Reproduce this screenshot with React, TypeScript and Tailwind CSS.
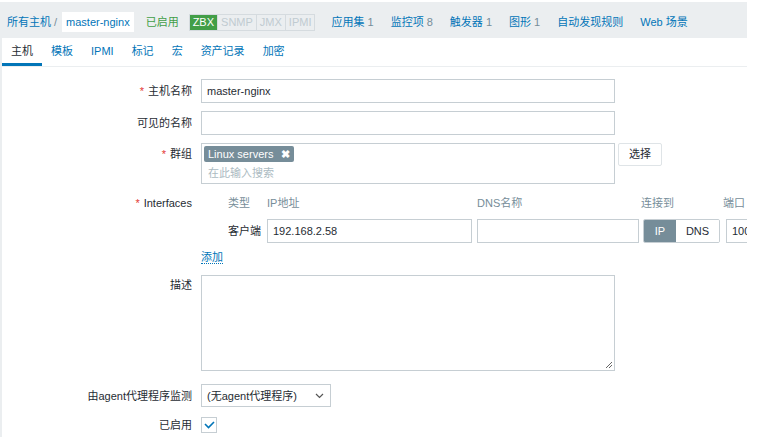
import React from 'react';

const font = { fontFamily: '"Liberation Sans", Arial, "Noto Sans CJK SC", sans-serif' };

const Label: React.FC<{ text: string; req?: boolean; pt?: string; lh?: string }> = ({ text, req, pt, lh }) => (
  <div className={`text-right text-[11px] text-[#1f2c33] ${pt ?? ''} ${lh ?? 'leading-[24px]'}`}>
    {req && <span className="text-[#e33734] mr-[4px]">*</span>}
    {text}
  </div>
);

const Row: React.FC<{ label: React.ReactNode; children: React.ReactNode; className?: string }> = ({ label, children, className }) => (
  <div className={`grid grid-cols-[190px_1fr] gap-x-[9px] leading-[16px] ${className ?? ''}`}>
    {label}
    <div>{children}</div>
  </div>
);

const Input: React.FC<{ value?: string; className?: string }> = ({ value, className }) => (
  <div className={`h-[24px] shrink-0 border border-[#c6ced3] bg-white px-[5px] text-[11px] leading-[22px] text-[#1f2c33] whitespace-nowrap overflow-hidden ${className ?? ''}`}>
    {value}
  </div>
);

export default function App() {
  const links: Array<[string, string?]> = [
    ['应用集', '1'],
    ['监控项', '8'],
    ['触发器', '1'],
    ['图形', '1'],
    ['自动发现规则'],
    ['Web 场景'],
  ];
  const tabs = ['主机', '模板', 'IPMI', '标记', '宏', '资产记录', '加密'];

  return (
    <div className="w-[761px] h-[442px] bg-white overflow-hidden" style={font}>
      <div className="w-[747px] pt-[2px] overflow-hidden">
        {/* header */}
        <div className="h-[36px] bg-[#ebeef0] flex items-center pt-[4px] pl-[7px] text-[11px] whitespace-nowrap">
          <span className="text-[#0275b8]">所有主机</span>
          <span className="text-[#768d99] ml-[3px] mr-[5px]">/</span>
          <span className="bg-white text-[#0275b8] h-[20px] leading-[20px] px-[4px]">master-nginx</span>
          <span className="text-[#429e47] ml-[12px]">已启用</span>
          <span className="ml-[10px] flex h-[17px] leading-[15px] border border-[#d5dbdf]">
            <span className="bg-[#429e47] text-white px-[3px]">ZBX</span>
            <span className="text-[#c0cbd0] px-[3px] border-l border-[#d5dbdf]">SNMP</span>
            <span className="text-[#c0cbd0] px-[3px] border-l border-[#d5dbdf]">JMX</span>
            <span className="text-[#c0cbd0] px-[3px] border-l border-[#d5dbdf]">IPMI</span>
          </span>
          {links.map(([t, n], i) => (
            <span key={t} className={i === 0 ? 'ml-[16px]' : 'ml-[17px]'}>
              <span className="text-[#0275b8]">{t}</span>
              {n && <span className="text-[#768d99]"> {n}</span>}
            </span>
          ))}
        </div>
        {/* body */}
        <div className="border-l-2 border-[#ebeef0]">
          <div className="flex h-[29px] border-b border-[#ebeef0] text-[11px]">
            {tabs.map((t, i) => (
              <div
                key={t}
                className={`px-[9px] leading-[26px] border-b-[3px] ${i === 0 ? 'border-[#0275b8] text-[#1f2c33]' : 'border-transparent text-[#0275b8]'}`}
              >
                {t}
              </div>
            ))}
          </div>

          <div className="pt-[12px] flex flex-col">
            <Row label={<Label text="主机名称" req />}>
              <Input value="master-nginx" className="w-[414px]" />
            </Row>
            <Row label={<Label text="可见的名称" />} className="mt-[8px]">
              <Input className="w-[414px]" />
            </Row>
            <Row label={<Label text="群组" req pt="pt-[3px]" lh="leading-[16px]" />} className="mt-[8px]">
              <div className="flex items-start">
                <div className="w-[414px] h-[41px] border border-[#c6ced3] bg-white pl-[2px] pt-[2px] flex flex-col items-start">
                  <div className="flex items-center h-[16px] bg-[#768d99] text-white text-[11px] leading-[16px] px-[4px] rounded-[2px]">
                    Linux servers
                    <span className="ml-[8px] font-bold text-[11px]">✖</span>
                  </div>
                  <div className="text-[11px] text-[#acbbc2] leading-[16px] mt-[3px] pl-[4px]">在此输入搜索</div>
                </div>
                <div className="ml-[3px] w-[44px] h-[23px] border border-[#dfe4e7] rounded-[2px] bg-white text-center text-[11px] leading-[21px] text-[#1f2c33]">
                  选择
                </div>
              </div>
            </Row>
            <Row label={<Label text="Interfaces" req lh="leading-[16px]" />} className="mt-[11px]">
              <div className="pl-[27px] text-[11px] whitespace-nowrap">
                <div className="flex text-[#768d99] leading-[16px]">
                  <div className="w-[39px]">类型</div>
                  <div className="w-[210px]">IP地址</div>
                  <div className="w-[164px]">DNS名称</div>
                  <div className="w-[82px]">连接到</div>
                  <div>端口</div>
                </div>
                <div className="flex items-center mt-[8px]">
                  <div className="w-[39px] shrink-0 text-[#1f2c33]">客户端</div>
                  <Input value="192.168.2.58" className="w-[205px]" />
                  <Input className="w-[162px] ml-[5px]" />
                  <div className="ml-[4px] shrink-0 flex h-[24px] w-[77px] border border-[#c6ced3] rounded-[2px] overflow-hidden text-[11px] leading-[22px]">
                    <div className="w-[32px] bg-[#768d99] text-white text-center">IP</div>
                    <div className="flex-1 text-center text-[#1f2c33] bg-white">DNS</div>
                  </div>
                  <Input value="10050" className="w-[56px] ml-[6px]" />
                </div>
              </div>
            </Row>
            <Row label={<div />} className="mt-[7px]">
              <div className="h-[16px] leading-[15px] text-[11px]">
                <span className="text-[#0275b8] border-b border-dotted border-[#0275b8]">添加</span>
              </div>
            </Row>
            <Row label={<Label text="描述" pt="pt-[2px]" lh="leading-[16px]" />} className="mt-[9px]">
              <div className="relative w-[414px] h-[96px] border border-[#c6ced3] bg-white">
                <svg className="absolute right-[1px] bottom-[1px]" width="9" height="9" viewBox="0 0 9 9">
                  <path d="M8 2 L2 8 M8 5 L5 8" stroke="#666" strokeWidth="1" />
                </svg>
              </div>
            </Row>
            <Row label={<Label text="由agent代理程序监测" />} className="mt-[13px]">
              <div className="w-[130px] h-[23px] border border-[#c6ced3] bg-white flex items-center justify-between pl-[5px] pr-[6px] text-[11px] text-[#1f2c33] whitespace-nowrap">
                <span>(无agent代理程序)</span>
                <svg width="9" height="6" viewBox="0 0 9 6">
                  <path d="M1 1 L4.5 4.5 L8 1" stroke="#555" strokeWidth="1.2" fill="none" />
                </svg>
              </div>
            </Row>
            <Row label={<Label text="已启用" />} className="mt-[5px]">
              <div className="h-[24px] flex items-center">
                <div className="w-[16px] h-[16px] border border-[#c6ced3] bg-white flex items-center justify-center">
                  <svg width="11" height="8" viewBox="0 0 11 8">
                    <path d="M1 3 L4.5 6.5 L10 1" stroke="#0275b8" strokeWidth="1.6" fill="none" />
                  </svg>
                </div>
              </div>
            </Row>
          </div>
        </div>
      </div>
    </div>
  );
}
